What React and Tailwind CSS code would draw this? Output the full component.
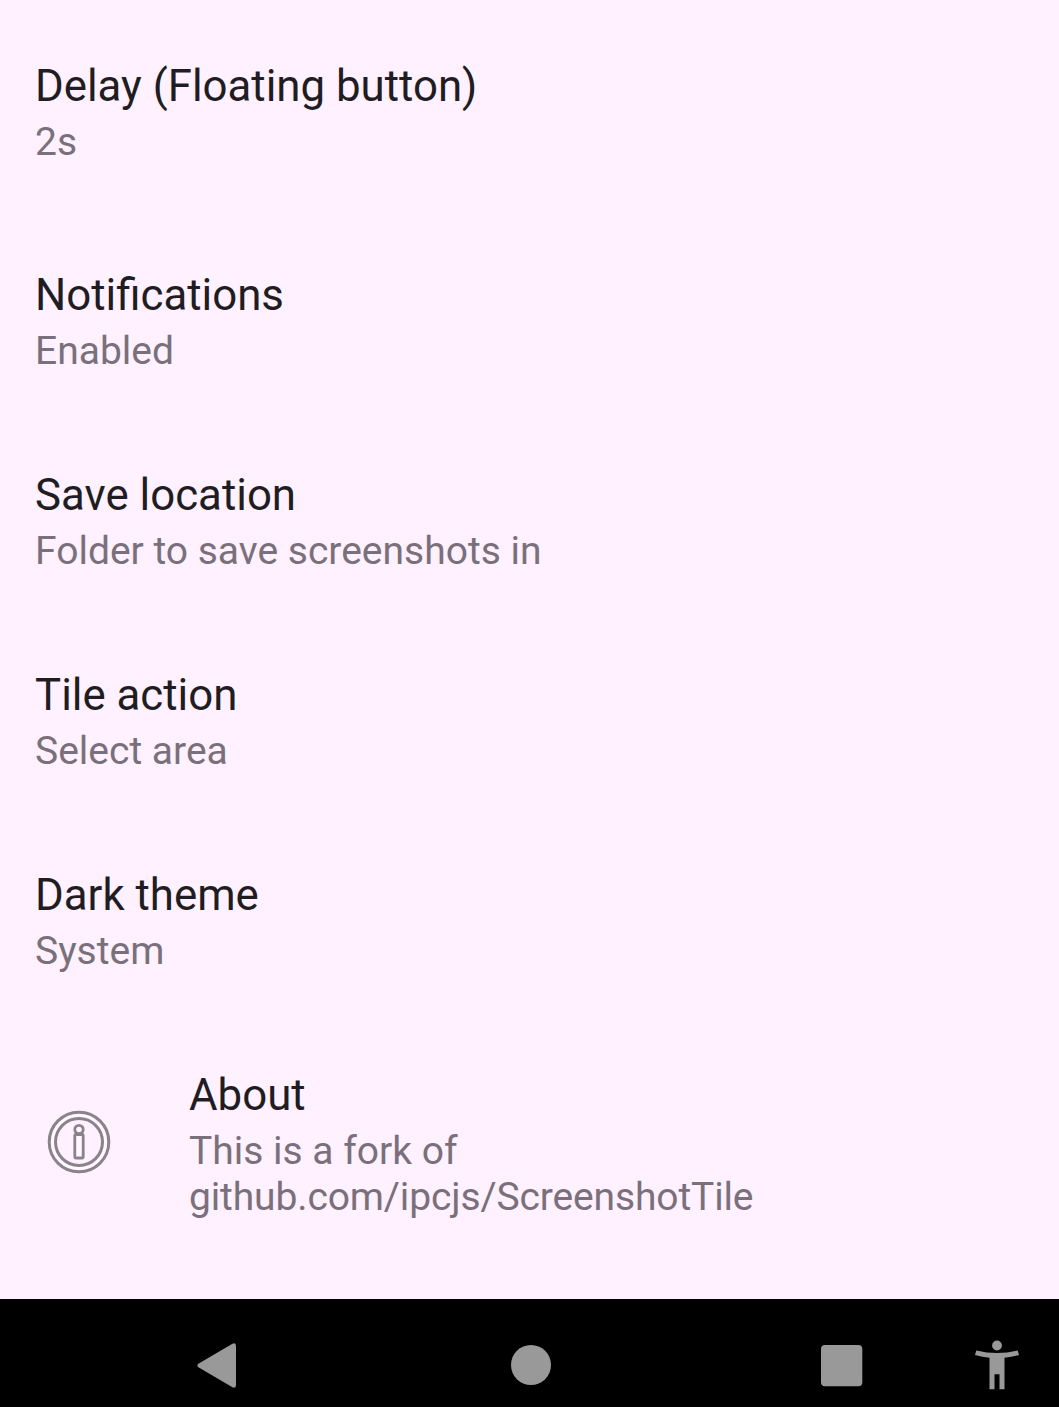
const items = [
  { title: 'Delay (Floating button)', summary: '2s', gap: 'mb-[99px]' },
  { title: 'Notifications', summary: 'Enabled', gap: 'mb-[90px]' },
  { title: 'Save location', summary: 'Folder to save screenshots in', gap: 'mb-[90px]' },
  { title: 'Tile action', summary: 'Select area', gap: 'mb-[90px]' },
  { title: 'Dark theme', summary: 'System', gap: 'mb-[90px]' },
];

function Label({ title, children }) {
  return (
    <div className="whitespace-nowrap">
      <h2 className="mb-0.5 h-[62px] text-[43.8px] leading-[62px] text-[#1f1d22]">{title}</h2>
      <p className="text-[39px] leading-[46px] text-[#7a707b]">{children}</p>
    </div>
  );
}

function InfoIcon() {
  return (
    <svg className="h-16 w-16" viewBox="0 0 64 64" fill="#fff8ff" stroke="#8b828c" strokeWidth="3">
      <circle cx="32" cy="32" r="29.800" />
      <circle cx="32" cy="32" r="23.500" fill="#fff1ff" />
      <circle cx="32" cy="19.500" r="4.200" strokeWidth="2.800" />
      <rect x="27.800" y="24.500" width="8.400" height="23.500" rx="1" strokeWidth="2.800" />
    </svg>
  );
}

export default function App() {
  return (
    <div className="flex h-[1407px] w-[1059px] flex-col overflow-hidden bg-[#fff1ff] font-[Roboto,sans-serif]">
      <main className="h-[1299px] pt-[55px]">
        {items.map((item) => (
          <section key={item.title} className={`pl-[35px] ${item.gap}`}>
            <Label title={item.title}>{item.summary}</Label>
          </section>
        ))}
        <section className="flex items-center pl-[47px]">
          <InfoIcon />
          <div className="ml-[78px]">
            <Label title="About">
              This is a fork of
              <br />
              <span className="tracking-[-0.13px]">github.com/ipcjs/ScreenshotTile</span>
            </Label>
          </div>
        </section>
      </main>
      <nav className="h-[108px] bg-black">
        <svg className="h-[108px] w-[1059px]" viewBox="0 1299 1059 108" fill="#999999">
          <path d="M198.800 1363.500 232 1344q4-2 4 2v39q0 4-4 2L198.800 1367.500q-3-2 0-4z" />
          <circle cx="531" cy="1365" r="20" />
          <rect x="821" y="1345" width="41.300" height="41.300" rx="4" />
          <circle cx="997" cy="1345.500" r="4.900" />
          <path d="M976.300 1350.500q20.700 5 41.400 0l1.300 4.500q-7 2-14.500 2.700v31.600h-5v-15h-5v15h-5v-31.600q-7-.7-14.500-2.700z" />
        </svg>
      </nav>
    </div>
  );
}
